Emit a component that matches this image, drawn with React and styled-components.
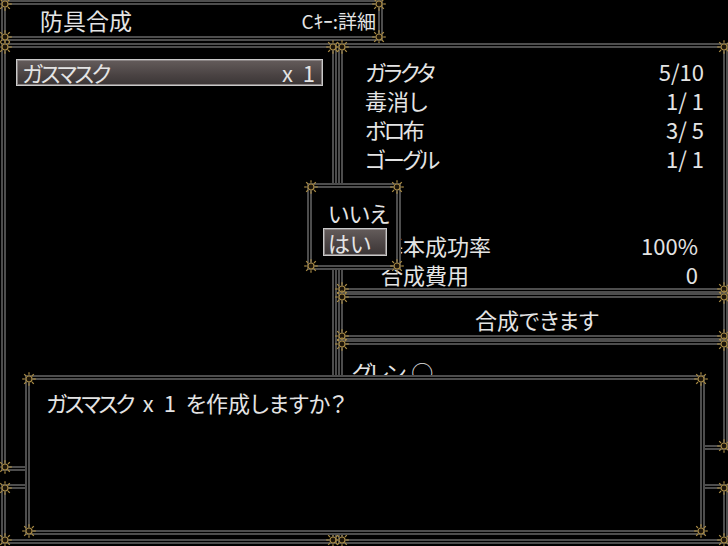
import React from "react";
import styled, { createGlobalStyle } from "styled-components";

const Global = createGlobalStyle`
  html, body { margin: 0; padding: 0; background: #000; }
  #root { width: 728px; height: 546px; }
`;

const LINE = "#4d4d4d";
const GOLD = "#a88a44";

const Screen = styled.div`
  position: relative;
  width: 728px;
  height: 546px;
  overflow: hidden;
  background: #000;
  font-family: "Noto Sans CJK JP", "Noto Sans", sans-serif;
  font-feature-settings: "palt";
  color: #e4e4e4;
  font-size: 22px;
  line-height: 29px;
  display: flex;
  flex-direction: column;
`;

const Win = styled.div`
  position: relative;
  box-sizing: border-box;
  background: #000;
  border: 2px solid ${LINE};
  box-shadow: inset 0 0 0 1px #000, inset 0 0 0 3px ${LINE};
`;

const Kana = styled.span`
  letter-spacing: -2.5px;
`;

const Mark = styled.span`
  margin-left: 8px;
`;

const Orn = styled.svg`
  position: absolute;
  width: 14px;
  height: 14px;
  ${(p) => p.$v}: -5px;
  ${(p) => p.$h}: -5px;
  pointer-events: none;
`;

const Ornament = ({ v, h }) => (
  <Orn $v={v} $h={h} viewBox="0 0 14 14">
    <circle cx="7" cy="7" r="3" fill="#1b140a" stroke={GOLD} strokeWidth="1.2" />
    {[0, 45, 90, 135, 180, 225, 270, 315].map((a) => {
      const r = (a * Math.PI) / 180;
      return (
        <line
          key={a}
          x1={7 + Math.cos(r) * 4.2}
          y1={7 + Math.sin(r) * 4.2}
          x2={7 + Math.cos(r) * 6.8}
          y2={7 + Math.sin(r) * 6.8}
          stroke={GOLD}
          strokeWidth="1.2"
        />
      );
    })}
  </Orn>
);

const Corners = () => (
  <>
    <Ornament v="top" h="left" />
    <Ornament v="top" h="right" />
    <Ornament v="bottom" h="left" />
    <Ornament v="bottom" h="right" />
  </>
);

const TopRow = styled.div`
  display: flex;
  height: 41px;
  flex-shrink: 0;
`;

const TitleWin = styled(Win)`
  width: 382px;
  margin-left: 1px;
  display: flex;
  align-items: center;
  justify-content: space-between;
  padding: 0 5px 0 37px;
`;

const TitleText = styled.span`
  font-size: 23px;
`;

const Hint = styled.span`
  font-size: 19px;
`;

const Body = styled.div`
  display: flex;
  flex: 1;
  margin-top: 2px;
`;

const LeftCol = styled.div`
  width: 336px;
  margin-left: 1px;
  display: flex;
  flex-direction: column;
`;

const RightCol = styled.div`
  flex: 1;
  margin-left: 1px;
  display: flex;
  flex-direction: column;
`;

const ListWin = styled(Win)`
  height: 428px;
  padding: 14px 12px 0 13px;
`;

const BottomWin = styled(Win)`
  height: 60px;
  margin-top: auto;
  margin-bottom: 2px;
`;

const Cursor = styled.div`
  box-sizing: border-box;
  height: 27px;
  display: flex;
  align-items: center;
  justify-content: space-between;
  padding: 0 7px 0 5px;
  border: 1px solid #c9c9c9;
  box-shadow: inset 0 0 0 1px #8a8484;
  background: linear-gradient(180deg, #645c5b 0%, #4a4343 60%, #3b3535 100%);
  white-space: pre;
  word-spacing: 5px;
`;

const MatWin = styled(Win)`
  height: 250px;
  padding: 12px 22px 0 25px;
`;

const Row = styled.div`
  display: flex;
  align-items: center;
  justify-content: space-between;
  height: 29px;
  padding-left: ${(p) => (p.$indent ? 16 : 0)}px;
  padding-right: ${(p) => (p.$inset ? 6 : 0)}px;
  white-space: pre;
`;

const StatusWin = styled(Win)`
  height: 47px;
  display: flex;
  align-items: center;
  justify-content: center;
  padding: 6px 0 0 8px;
`;

const PartyWin = styled(Win)`
  height: 110px;
  padding: 15px 10px 0 12px;
`;

const ChoiceWin = styled(Win)`
  position: absolute;
  left: 307px;
  top: 183px;
  width: 94px;
  height: 87px;
  padding: 13px 0 0 14px;
  display: flex;
  flex-direction: column;
  gap: 2px;
`;

const ChoiceItem = styled.div`
  box-sizing: border-box;
  height: 28px;
  width: 64px;
  padding-left: 5px;
  display: flex;
  align-items: center;
  white-space: nowrap;
  line-height: 24px;
`;

const ChoiceCursor = styled(Cursor)`
  height: 28px;
  width: 64px;
  padding-left: 4px;
  line-height: 24px;
`;

const Dialog = styled(Win)`
  position: absolute;
  left: 25px;
  top: 375px;
  width: 680px;
  height: 160px;
  padding: 11px 20px 0 19px;
  white-space: pre;
  word-spacing: 5px;
`;

const materials = [
  [<Kana>ガラクタ</Kana>, "5/10"],
  ["毒消し", "1/ 1"],
  [<><Kana>ボロ</Kana>布</>, "3/ 5"],
  [<Kana>ゴーグル</Kana>, "1/ 1"],
];

export default function App() {
  return (
    <>
      <Global />
      <Screen>
        <TopRow>
          <TitleWin>
            <TitleText>防具合成</TitleText>
            <Hint>Cｷｰ:詳細</Hint>
            <Corners />
          </TitleWin>
        </TopRow>
        <Body>
          <LeftCol>
            <ListWin>
              <Cursor>
                <Kana>ガスマスク</Kana>
                <span>x 1</span>
              </Cursor>
              <Corners />
            </ListWin>
            <BottomWin>
              <Corners />
            </BottomWin>
          </LeftCol>
          <RightCol>
            <MatWin>
              {materials.map(([n, v], i) => (
                <Row key={i}>
                  <span>{n}</span>
                  <span>{v}</span>
                </Row>
              ))}
              <Row />
              <Row />
              <Row $indent $inset>
                <span>基本成功率</span>
                <span>100%</span>
              </Row>
              <Row $indent $inset>
                <span>合成費用</span>
                <span>0</span>
              </Row>
              <Corners />
            </MatWin>
            <StatusWin>
              合成できます
              <Corners />
            </StatusWin>
            <PartyWin>
              <Row>
                <span>
                  <Kana>グレン</Kana>
                  <Mark>○</Mark>
                </span>
              </Row>
              <Corners />
            </PartyWin>
            <BottomWin>
              <Corners />
            </BottomWin>
          </RightCol>
        </Body>
        <ChoiceWin>
          <ChoiceItem>いいえ</ChoiceItem>
          <ChoiceCursor>はい</ChoiceCursor>
          <Corners />
        </ChoiceWin>
        <Dialog>
          <Kana>ガスマスク</Kana> x 1 を作成しますか？
          <Corners />
        </Dialog>
      </Screen>
    </>
  );
}
